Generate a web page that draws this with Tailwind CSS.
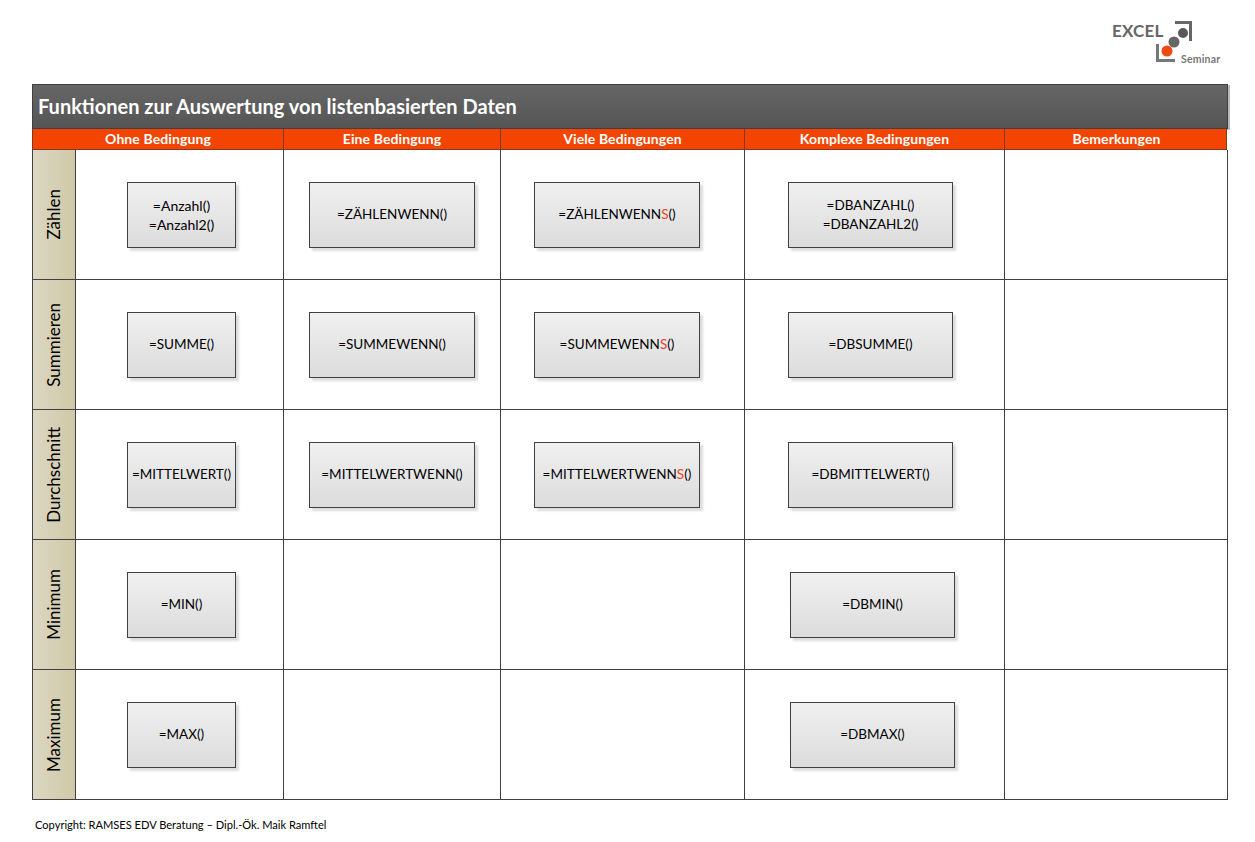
<!doctype html>
<html lang="de">
<head>
<meta charset="utf-8">
<script src="https://cdn.jsdelivr.net/npm/@tailwindcss/browser@4"></script>
</head>
<body class="bg-white font-['Lato','Carlito',sans-serif] w-[1255px] h-[842px] overflow-hidden text-black">
<div class="h-[84px] flex justify-end pr-[33px] pt-[20px]">
  <div class="relative w-[110px] h-[45px]">
    <span class="absolute left-0 top-[1px] text-[17px] leading-5 font-bold text-[#666] tracking-[0.2px]">EXCEL</span>
    <svg class="absolute left-[40px] top-0" width="44" height="44" viewBox="0 0 44 44">
      <path d="M23 2.5H38.5V21" fill="none" stroke="#666" stroke-width="3"/>
      <path d="M5.5 24V40.5H23" fill="none" stroke="#777" stroke-width="3"/>
      <circle cx="31" cy="13" r="5" fill="#595959"/>
      <circle cx="22" cy="22" r="5.5" fill="#666"/>
      <circle cx="15" cy="31" r="5.5" fill="#f04a10"/>
    </svg>
    <span class="absolute left-[69px] top-[33px] text-[10.5px] leading-3 font-bold text-[#777] tracking-[0.2px]">Seminar</span>
  </div>
</div>
<div class="ml-[32px] w-[1196px] relative">
  <div class="h-[45px] border border-[#404040] bg-linear-to-b from-[#666] to-[#555] pl-[5px] pb-[2px] flex items-center text-white text-[20px] font-bold shadow-[2px_1px_0_#bbb]">Funktionen zur Auswertung von listenbasierten Daten</div>
  <div class="grid grid-cols-[251px_217px_244px_260px_223px] h-[21px] bg-[#f34501] border-x border-b border-[#803a20] text-white text-[14px] font-bold text-center leading-[20px] tracking-[0.1px] w-[1195px]">
    <div class="border-r border-[#803a20]">Ohne Bedingung</div>
    <div class="border-r border-[#803a20]">Eine Bedingung</div>
    <div class="border-r border-[#803a20]">Viele Bedingungen</div>
    <div class="border-r border-[#803a20]">Komplexe Bedingungen</div>
    <div>Bemerkungen</div>
  </div>
  <div class="grid grid-cols-[43px_208px_217px_244px_260px_223px] grid-rows-[130px_130px_130px_130px_130px] border-l border-[#404040] text-[13.5px] [&>div]:border-r [&>div]:border-b [&>div]:border-[#404040]">

    <div class="bg-linear-to-r from-[#dcd7c2] to-[#cfc8a8] flex items-center justify-center"><span class="[writing-mode:vertical-rl] rotate-180 text-[17px] -mt-[1px]">Zählen</span></div>
    <div class="pl-[51px] pt-[32px]"><div class="w-[109px] h-[66px] border border-[#404040] bg-linear-to-b from-[#f0f0f0] to-[#dcdcdc] shadow-[3px_3px_2px_#ddd] flex flex-col items-center justify-center leading-[19px] text-[14px] pb-[1px]"><span>=Anzahl()</span><span>=Anzahl2()</span></div></div>
    <div class="pl-[25px] pt-[32px]"><div class="w-[166px] h-[66px] border border-[#404040] bg-linear-to-b from-[#f0f0f0] to-[#dcdcdc] shadow-[3px_3px_2px_#ddd] flex items-center justify-center pb-[1px]">=ZÄHLENWENN()</div></div>
    <div class="pl-[33px] pt-[32px]"><div class="w-[166px] h-[66px] border border-[#404040] bg-linear-to-b from-[#f0f0f0] to-[#dcdcdc] shadow-[3px_3px_2px_#ddd] flex items-center justify-center pb-[1px]"><span>=ZÄHLENWENN<span class="text-[#e8432a]">S</span>()</span></div></div>
    <div class="pl-[43px] pt-[32px]"><div class="w-[165px] h-[66px] border border-[#404040] bg-linear-to-b from-[#f0f0f0] to-[#dcdcdc] shadow-[3px_3px_2px_#ddd] flex flex-col items-center justify-center leading-[19px] pb-[1px]"><span>=DBANZAHL()</span><span>=DBANZAHL2()</span></div></div>
    <div></div>

    <div class="bg-linear-to-r from-[#dcd7c2] to-[#cfc8a8] flex items-center justify-center"><span class="[writing-mode:vertical-rl] rotate-180 text-[17px]">Summieren</span></div>
    <div class="pl-[51px] pt-[32px]"><div class="w-[109px] h-[66px] border border-[#404040] bg-linear-to-b from-[#f0f0f0] to-[#dcdcdc] shadow-[3px_3px_2px_#ddd] flex items-center justify-center pb-[1px]">=SUMME()</div></div>
    <div class="pl-[25px] pt-[32px]"><div class="w-[166px] h-[66px] border border-[#404040] bg-linear-to-b from-[#f0f0f0] to-[#dcdcdc] shadow-[3px_3px_2px_#ddd] flex items-center justify-center pb-[1px]">=SUMMEWENN()</div></div>
    <div class="pl-[33px] pt-[32px]"><div class="w-[166px] h-[66px] border border-[#404040] bg-linear-to-b from-[#f0f0f0] to-[#dcdcdc] shadow-[3px_3px_2px_#ddd] flex items-center justify-center pb-[1px]"><span>=SUMMEWENN<span class="text-[#e8432a]">S</span>()</span></div></div>
    <div class="pl-[43px] pt-[32px]"><div class="w-[165px] h-[66px] border border-[#404040] bg-linear-to-b from-[#f0f0f0] to-[#dcdcdc] shadow-[3px_3px_2px_#ddd] flex items-center justify-center pb-[1px]">=DBSUMME()</div></div>
    <div></div>

    <div class="bg-linear-to-r from-[#dcd7c2] to-[#cfc8a8] flex items-center justify-center"><span class="[writing-mode:vertical-rl] rotate-180 text-[17px]">Durchschnitt</span></div>
    <div class="pl-[51px] pt-[32px]"><div class="w-[109px] h-[66px] border border-[#404040] bg-linear-to-b from-[#f0f0f0] to-[#dcdcdc] shadow-[3px_3px_2px_#ddd] flex items-center justify-center pb-[1px]">=MITTELWERT()</div></div>
    <div class="pl-[25px] pt-[32px]"><div class="w-[166px] h-[66px] border border-[#404040] bg-linear-to-b from-[#f0f0f0] to-[#dcdcdc] shadow-[3px_3px_2px_#ddd] flex items-center justify-center pb-[1px]">=MITTELWERTWENN()</div></div>
    <div class="pl-[33px] pt-[32px]"><div class="w-[166px] h-[66px] border border-[#404040] bg-linear-to-b from-[#f0f0f0] to-[#dcdcdc] shadow-[3px_3px_2px_#ddd] flex items-center justify-center pb-[1px]"><span>=MITTELWERTWENN<span class="text-[#e8432a]">S</span>()</span></div></div>
    <div class="pl-[43px] pt-[32px]"><div class="w-[165px] h-[66px] border border-[#404040] bg-linear-to-b from-[#f0f0f0] to-[#dcdcdc] shadow-[3px_3px_2px_#ddd] flex items-center justify-center pb-[1px]">=DBMITTELWERT()</div></div>
    <div></div>

    <div class="bg-linear-to-r from-[#dcd7c2] to-[#cfc8a8] flex items-center justify-center"><span class="[writing-mode:vertical-rl] rotate-180 text-[17px]">Minimum</span></div>
    <div class="pl-[51px] pt-[32px]"><div class="w-[109px] h-[66px] border border-[#404040] bg-linear-to-b from-[#f0f0f0] to-[#dcdcdc] shadow-[3px_3px_2px_#ddd] flex items-center justify-center pb-[1px]">=MIN()</div></div>
    <div></div>
    <div></div>
    <div class="pl-[45px] pt-[32px]"><div class="w-[165px] h-[66px] border border-[#404040] bg-linear-to-b from-[#f0f0f0] to-[#dcdcdc] shadow-[3px_3px_2px_#ddd] flex items-center justify-center pb-[1px]">=DBMIN()</div></div>
    <div></div>

    <div class="bg-linear-to-r from-[#dcd7c2] to-[#cfc8a8] flex items-center justify-center"><span class="[writing-mode:vertical-rl] rotate-180 text-[17px]">Maximum</span></div>
    <div class="pl-[51px] pt-[32px]"><div class="w-[109px] h-[66px] border border-[#404040] bg-linear-to-b from-[#f0f0f0] to-[#dcdcdc] shadow-[3px_3px_2px_#ddd] flex items-center justify-center pb-[1px]">=MAX()</div></div>
    <div></div>
    <div></div>
    <div class="pl-[45px] pt-[32px]"><div class="w-[165px] h-[66px] border border-[#404040] bg-linear-to-b from-[#f0f0f0] to-[#dcdcdc] shadow-[3px_3px_2px_#ddd] flex items-center justify-center pb-[1px]">=DBMAX()</div></div>
    <div></div>
  </div>
</div>
<p class="ml-[35px] mt-[17px] text-[11.1px] leading-4">Copyright: RAMSES EDV Beratung – Dipl.-Ök. Maik Ramftel</p>
</body>
</html>
